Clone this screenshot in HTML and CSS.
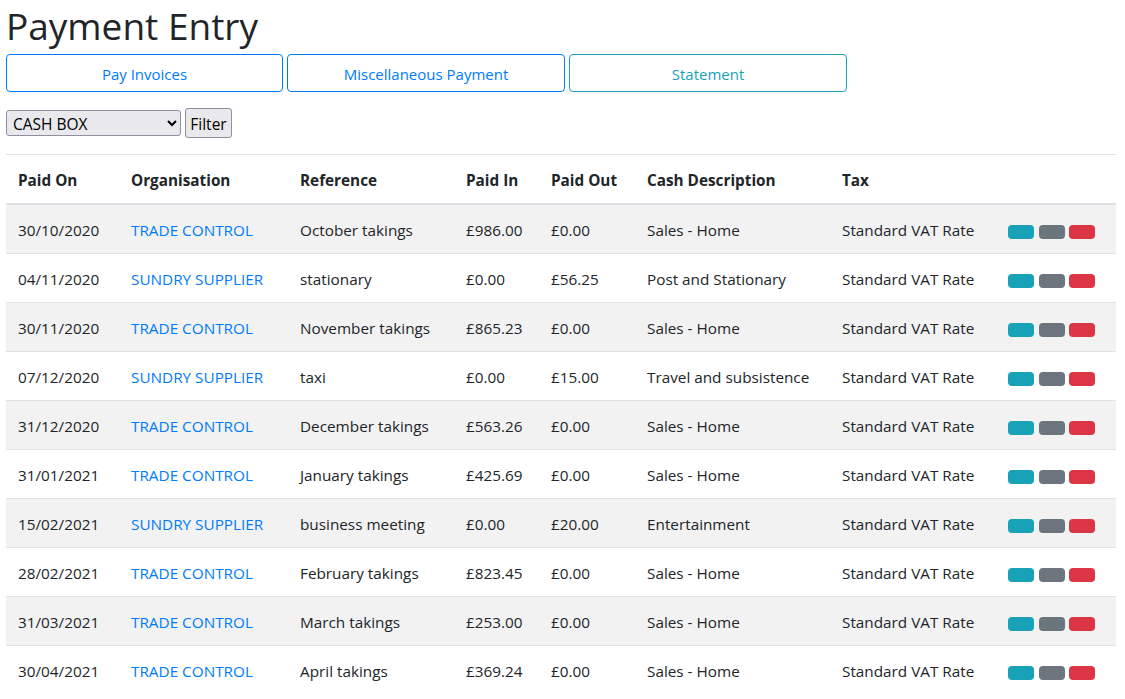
FILE: index.html
```html
<!DOCTYPE html>
<html lang="en">
<head>
<meta charset="utf-8">
<title>Payment Entry</title>
<link rel="stylesheet" href="styles.css">
</head>
<body>
<div class="page">
  <h1 class="title">Payment Entry</h1>
  <div class="tabs">
    <a class="tab tab-primary" href="#">Pay Invoices</a>
    <a class="tab tab-primary" href="#">Miscellaneous Payment</a>
    <a class="tab tab-info" href="#">Statement</a>
  </div>
  <form class="filter">
    <select class="filter-select">
      <option>CASH BOX</option>
    </select>
    <button type="button" class="filter-btn">Filter</button>
  </form>
  <table class="grid">
    <colgroup>
      <col class="c1"><col class="c2"><col class="c3"><col class="c4"><col class="c5"><col class="c6"><col class="c7"><col class="c8">
    </colgroup>
    <thead>
      <tr><th>Paid On</th><th>Organisation</th><th>Reference</th><th>Paid In</th><th>Paid Out</th><th>Cash Description</th><th>Tax</th><th></th></tr>
    </thead>
    <tbody>
      <tr><td>30/10/2020</td><td><a href="#">TRADE CONTROL</a></td><td>October takings</td><td>£986.00</td><td>£0.00</td><td>Sales - Home</td><td>Standard VAT Rate</td><td><div class="acts"><span class="act act-info"></span><span class="act act-sec"></span><span class="act act-dan"></span></div></td></tr>
      <tr><td>04/11/2020</td><td><a href="#">SUNDRY SUPPLIER</a></td><td>stationary</td><td>£0.00</td><td>£56.25</td><td>Post and Stationary</td><td>Standard VAT Rate</td><td><div class="acts"><span class="act act-info"></span><span class="act act-sec"></span><span class="act act-dan"></span></div></td></tr>
      <tr><td>30/11/2020</td><td><a href="#">TRADE CONTROL</a></td><td>November takings</td><td>£865.23</td><td>£0.00</td><td>Sales - Home</td><td>Standard VAT Rate</td><td><div class="acts"><span class="act act-info"></span><span class="act act-sec"></span><span class="act act-dan"></span></div></td></tr>
      <tr><td>07/12/2020</td><td><a href="#">SUNDRY SUPPLIER</a></td><td>taxi</td><td>£0.00</td><td>£15.00</td><td>Travel and subsistence</td><td>Standard VAT Rate</td><td><div class="acts"><span class="act act-info"></span><span class="act act-sec"></span><span class="act act-dan"></span></div></td></tr>
      <tr><td>31/12/2020</td><td><a href="#">TRADE CONTROL</a></td><td>December takings</td><td>£563.26</td><td>£0.00</td><td>Sales - Home</td><td>Standard VAT Rate</td><td><div class="acts"><span class="act act-info"></span><span class="act act-sec"></span><span class="act act-dan"></span></div></td></tr>
      <tr><td>31/01/2021</td><td><a href="#">TRADE CONTROL</a></td><td>January takings</td><td>£425.69</td><td>£0.00</td><td>Sales - Home</td><td>Standard VAT Rate</td><td><div class="acts"><span class="act act-info"></span><span class="act act-sec"></span><span class="act act-dan"></span></div></td></tr>
      <tr><td>15/02/2021</td><td><a href="#">SUNDRY SUPPLIER</a></td><td>business meeting</td><td>£0.00</td><td>£20.00</td><td>Entertainment</td><td>Standard VAT Rate</td><td><div class="acts"><span class="act act-info"></span><span class="act act-sec"></span><span class="act act-dan"></span></div></td></tr>
      <tr><td>28/02/2021</td><td><a href="#">TRADE CONTROL</a></td><td>February takings</td><td>£823.45</td><td>£0.00</td><td>Sales - Home</td><td>Standard VAT Rate</td><td><div class="acts"><span class="act act-info"></span><span class="act act-sec"></span><span class="act act-dan"></span></div></td></tr>
      <tr><td>31/03/2021</td><td><a href="#">TRADE CONTROL</a></td><td>March takings</td><td>£253.00</td><td>£0.00</td><td>Sales - Home</td><td>Standard VAT Rate</td><td><div class="acts"><span class="act act-info"></span><span class="act act-sec"></span><span class="act act-dan"></span></div></td></tr>
      <tr><td>30/04/2021</td><td><a href="#">TRADE CONTROL</a></td><td>April takings</td><td>£369.24</td><td>£0.00</td><td>Sales - Home</td><td>Standard VAT Rate</td><td><div class="acts"><span class="act act-info"></span><span class="act act-sec"></span><span class="act act-dan"></span></div></td></tr>
    </tbody>
  </table>
</div>
</body>
</html>
```
FILE: styles.css
```css
* { box-sizing: border-box; }
html, body { margin: 0; padding: 0; background: #fff; }
body {
  font-family: "Segoe UI", "Open Sans", "Noto Sans", "Liberation Sans", sans-serif;
  font-size: 16px;
  line-height: 1.5;
  color: #212529;
}
.page { padding: 0 9px 0 6px; }
.title {
  margin: 0 0 4px 0;
  padding-top: 2px;
  font-size: 37px;
  font-weight: 400;
  line-height: 48px;
}
.tabs {
  display: grid;
  grid-template-columns: 277px 278px 278px;
  gap: 4px;
}
.tab {
  height: 38px;
  display: flex;
  align-items: center;
  justify-content: center;
  border: 1px solid #007bff;
  border-radius: 4px;
  color: #007bff;
  text-decoration: none;
  font-size: 15px;
  padding-top: 2px;
}
.tab-info { border-color: #17a2b8; color: #17a2b8; }
.filter {
  display: flex;
  align-items: center;
  gap: 4px;
  margin: 16px 0 16px 0;
}
.filter-select {
  width: 175px;
  height: 26px;
  font-family: inherit;
  font-size: 15.5px;
  color: #000;
  background: #e9e9ed;
  border: 1px solid #8f8f9d;
  border-radius: 3px;
  padding: 1px 2px 0;
}
.filter-btn {
  height: 30px;
  width: 47px;
  font-family: inherit;
  font-size: 15.5px;
  color: #000;
  background: #e9e9ed;
  border: 1px solid #8f8f9d;
  border-radius: 3px;
  padding: 1px 3px 0;
}
.grid {
  width: 1110px;
  border-collapse: collapse;
  table-layout: fixed;
  border-top: 1px solid #dee2e6;
}
.c1 { width: 113px; }
.c2 { width: 169px; }
.c3 { width: 166px; }
.c4 { width: 85px; }
.c5 { width: 96px; }
.c6 { width: 195px; }
.c7 { width: 166px; }
.c8 { width: 120px; }
.grid th, .grid td {
  padding: 13px 12px 11px;
  text-align: left;
  vertical-align: top;
  white-space: nowrap;
  font-size: 15.3px;
  line-height: 24px;
}
.grid th { font-weight: 700; border-bottom: 2px solid #dee2e6; }
.grid td { border-top: 1px solid #dee2e6; }
.grid tbody tr:first-child td { border-top: 0; }
.grid tbody tr:nth-child(odd) { background: #f2f2f2; }
.grid a { color: #007bff; text-decoration: none; }
.acts { display: flex; gap: 4.5px; margin-top: 7px; }
.act { display: block; width: 26px; height: 14px; border-radius: 4px; }
.act-info { background: #17a2b8; }
.act-sec { background: #6c757d; }
.act-dan { background: #dc3545; }
```
